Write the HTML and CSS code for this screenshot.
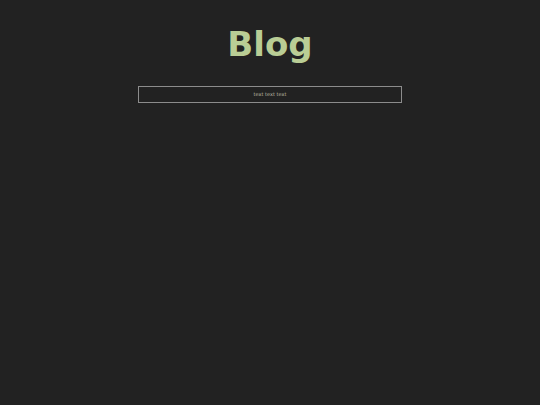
FILE: index.html
```html
<!DOCTYPE html>
<html>
<head>
<meta charset="utf-8">
<link rel="stylesheet" href="styles.css">
</head>
<body>
<div class="page">
  <h1 class="title">Blog</h1>
  <div class="search">text text text</div>
</div>
</body>
</html>
```
FILE: styles.css
```css
html, body {
  margin: 0;
  padding: 0;
  background: #222222;
  width: 540px;
  height: 405px;
}
.page {
  display: flex;
  flex-direction: column;
  align-items: center;
  padding-top: 25px;
  font-family: "DejaVu Sans", sans-serif;
}
.title {
  margin: 0;
  font-size: 34px;
  line-height: 38px;
  font-weight: bold;
  color: #b9cd95;
}
.search {
  margin-top: 23px;
  width: 262px;
  height: 15px;
  border: 1px solid #8c8c8c;
  color: #bdb8a4;
  font-size: 5px;
  line-height: 15px;
  text-align: center;
}
```
